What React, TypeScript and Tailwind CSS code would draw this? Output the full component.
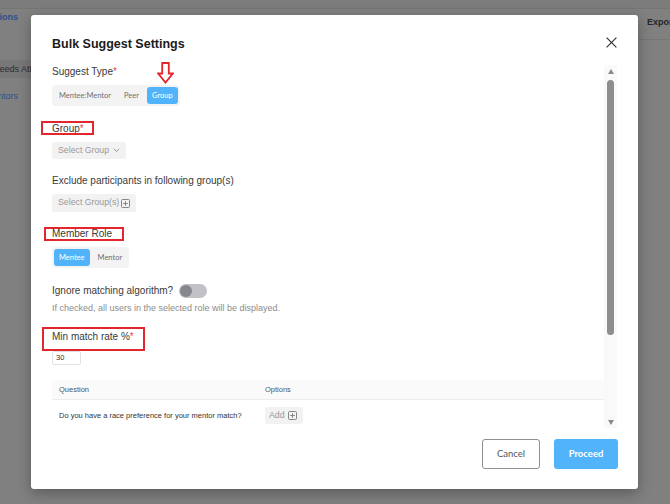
import React from 'react';

const sans = "font-['Liberation_Sans',Arial,sans-serif]";
const lato = "font-['Lato','Liberation_Sans',sans-serif]";

function PlusBox({ color = '#7a7a7a' }: { color?: string }) {
  return (
    <svg width="9" height="9" viewBox="0 0 9 9" className="shrink-0">
      <rect x="0.5" y="0.5" width="8" height="8" rx="1" fill="none" stroke={color} strokeWidth="0.9" />
      <path d="M4.5 2.2v4.6M2.2 4.5h4.6" stroke={color} strokeWidth="0.9" />
    </svg>
  );
}

function FieldLabel({
  text,
  required,
  box,
}: {
  text: string;
  required?: boolean;
  box?: string;
}) {
  return (
    <div className="relative h-[14px] w-fit text-[10px] leading-[14px] text-[#3a3a3a]">
      {text}
      {required && <span className="text-[#e5484d]">*</span>}
      {box && <span className={box} />}
    </div>
  );
}

function Segmented({ options, active }: { options: string[]; active: string }) {
  return (
    <div className={`flex h-[21px] w-fit items-center gap-[3px] rounded-[4px] bg-[#f3f3f4] p-[2px] text-[7.5px] ${lato}`}>
      {options.map((o) =>
        o === active ? (
          <div key={o} className="flex h-[17px] items-center rounded-[3px] bg-[#51b3fa] px-[5px] text-white">
            {o}
          </div>
        ) : (
          <div key={o} className="flex h-[17px] items-center px-[5px] text-[#707070]">
            {o}
          </div>
        ),
      )}
    </div>
  );
}

function Scrollbar() {
  return (
    <div className="mr-[21px] flex w-[13px] flex-col items-center bg-[#f9f9f9]">
      <div className="mt-[4px] h-0 w-0 border-x-[3.5px] border-b-[5px] border-x-transparent border-b-[#8a8a8a]" />
      <div className="mt-[6px] h-[255px] w-[7px] rounded-full bg-[#8e8e8e]" />
      <div className="mb-[3px] mt-auto h-0 w-0 border-x-[3.5px] border-t-[5px] border-x-transparent border-t-[#8a8a8a]" />
    </div>
  );
}

function BulkSuggestModal() {
  return (
    <div className={`absolute left-[31px] top-[15px] flex h-[474px] w-[607px] flex-col rounded-[3px] bg-white shadow-[0_4px_14px_rgba(0,0,0,0.3)] ${sans}`}>
      <div className="flex items-start justify-between pl-[21px] pr-[21px] pt-[21px]">
        <div className="text-[12.5px] font-bold leading-[16px] text-[#1b1b1b]">Bulk Suggest Settings</div>
        <svg width="11" height="11" viewBox="0 0 11 11" className="mt-[1px]">
          <path d="M0.6 0.6l9.8 9.8M10.4 0.6L0.6 10.4" stroke="#333" strokeWidth="1.2" />
        </svg>
      </div>

      <div className="mt-[13px] flex h-[363px]">
        <div className="flex-1 overflow-hidden pl-[21px]">
          <FieldLabel text="Suggest Type" required />
          <div className="mt-[6px]">
            <Segmented options={['Mentee:Mentor', 'Peer', 'Group']} active="Group" />
          </div>

          <div className="mt-[16px]">
            <FieldLabel
              text="Group"
              required
              box="absolute -left-[11px] -top-[1px] h-[14px] w-[53px] border-2 border-[#e3262d]"
            />
          </div>
          <div className="mt-[6px] flex h-[17px] w-fit items-center gap-[4px] rounded-[2px] bg-[#f2f2f2] pl-[6px] pr-[6px] text-[8.75px] text-[#999]">
            Select Group
            <svg width="7" height="5" viewBox="0 0 7 5">
              <path d="M0.8 0.9l2.7 2.6L6.2 0.9" stroke="#8a8a8a" strokeWidth="0.9" fill="none" />
            </svg>
          </div>

          <div className="mt-[15px]">
            <FieldLabel text="Exclude participants in following group(s)" />
          </div>
          <div className="mt-[6px] flex h-[18px] w-fit items-center gap-[2px] rounded-[2px] bg-[#f2f2f2] pl-[6px] pr-[6px] text-[8.75px] text-[#999]">
            Select Group(s)
            <PlusBox />
          </div>

          <div className="mt-[15px]">
            <FieldLabel
              text="Member Role"
              box="absolute -left-[8px] top-0 h-[14px] w-[80px] border-2 border-[#e3262d]"
            />
          </div>
          <div className="mt-[6px]">
            <Segmented options={['Mentee', 'Mentor']} active="Mentee" />
          </div>

          <div className="mt-[15px] flex h-[15px] items-center gap-[6px]">
            <FieldLabel text="Ignore matching algorithm?" />
            <div className="flex h-[14px] w-[28px] items-center rounded-full bg-[#c2c2c6] pl-[1px]">
              <div className="h-[12px] w-[12px] rounded-full bg-[#86868d]" />
            </div>
          </div>
          <div className="mt-[4px] h-[12px] text-[9px] leading-[12px] text-[#8c8c8c]">
            If checked, all users in the selected role will be displayed.
          </div>

          <div className="mt-[16px]">
            <FieldLabel
              text="Min match rate %"
              required
              box="absolute -left-[10px] -top-[3px] h-[24px] w-[103px] border-2 border-[#e3262d]"
            />
          </div>
          <div className="mt-[7px] flex h-[14px] w-[29px] items-center rounded-[2px] border border-[#e2e2e2] pl-[3px] text-[7.5px] text-[#333]">
            30
          </div>

          <div className="mt-[15px] text-[7.5px]">
            <div className="grid h-[20px] grid-cols-[206px_1fr] items-center rounded-t-[4px] border-b border-[#ececec] bg-[#fafafa] text-[#555555]">
              <div className="pl-[7px]">Question</div>
              <div className="pl-[7px]">Options</div>
            </div>
            <div className="grid h-[31px] grid-cols-[206px_1fr] items-center">
              <div className="pl-[7px] text-[#333333]">Do you have a race preference for your mentor match?</div>
              <div className="pl-[7px]">
                <div className="flex h-[17px] w-fit items-center gap-[3px] rounded-[2px] bg-[#f2f2f2] pl-[4px] pr-[6px] text-[8.75px] text-[#999]">
                  Add
                  <PlusBox />
                </div>
              </div>
            </div>
          </div>
        </div>
        <Scrollbar />
      </div>

      <div className={`mt-[11px] flex justify-end gap-[14px] pr-[20px] ${lato}`}>
        <button className="flex h-[30px] w-[58px] items-center justify-center rounded-[3px] border border-[#8f8f8f] bg-white text-[9.5px] text-[#555]">
          Cancel
        </button>
        <button className="flex h-[30px] w-[64px] items-center justify-center rounded-[3px] bg-[#51b3fa] text-[9.5px] font-bold text-white">
          Proceed
        </button>
      </div>

      {/* hollow pointer above the Group option */}
      <svg width="17" height="22" viewBox="0 0 17 22" className="absolute left-[126px] top-[47px]">
        <path d="M5.2 1H11.8V11.5H15.8L8.5 20.6L1.2 11.5H5.2Z" fill="none" stroke="#e3262d" strokeWidth="1.8" strokeLinejoin="miter" />
      </svg>
    </div>
  );
}

export default function App() {
  return (
    <div className={`relative h-[504px] w-[670px] overflow-hidden bg-[#808080] ${sans}`}>
      <div className="flex h-full flex-col">
        <div className="h-[9px] border-b border-[#757575] bg-[#7c7c7c]" />
        <div className="flex flex-1">
          <div className="w-[31px] overflow-hidden text-[9px] leading-[12px]">
            <div className="mt-[2px] flex w-[18px] justify-end whitespace-nowrap font-bold text-[#2e4f8c]">
              Connections
            </div>
            <div className="mt-[37px] flex h-[18px] items-center whitespace-nowrap bg-[#787878] text-[#2f2f2f]">
              <span className="-ml-[7px]">Needs Attention</span>
            </div>
            <div className="mt-[12px] flex w-[18px] justify-end whitespace-nowrap text-[#2e4f8c]">Mentors</div>
          </div>
          <div className="flex-1" />
          <div className="w-[32px]">
            <div className="h-[31px] border-b border-[#767676] pl-[9px] pt-[7px] text-[9px] font-bold leading-[12px] text-[#262626]">
              Export
            </div>
          </div>
        </div>
      </div>
      <BulkSuggestModal />
    </div>
  );
}
